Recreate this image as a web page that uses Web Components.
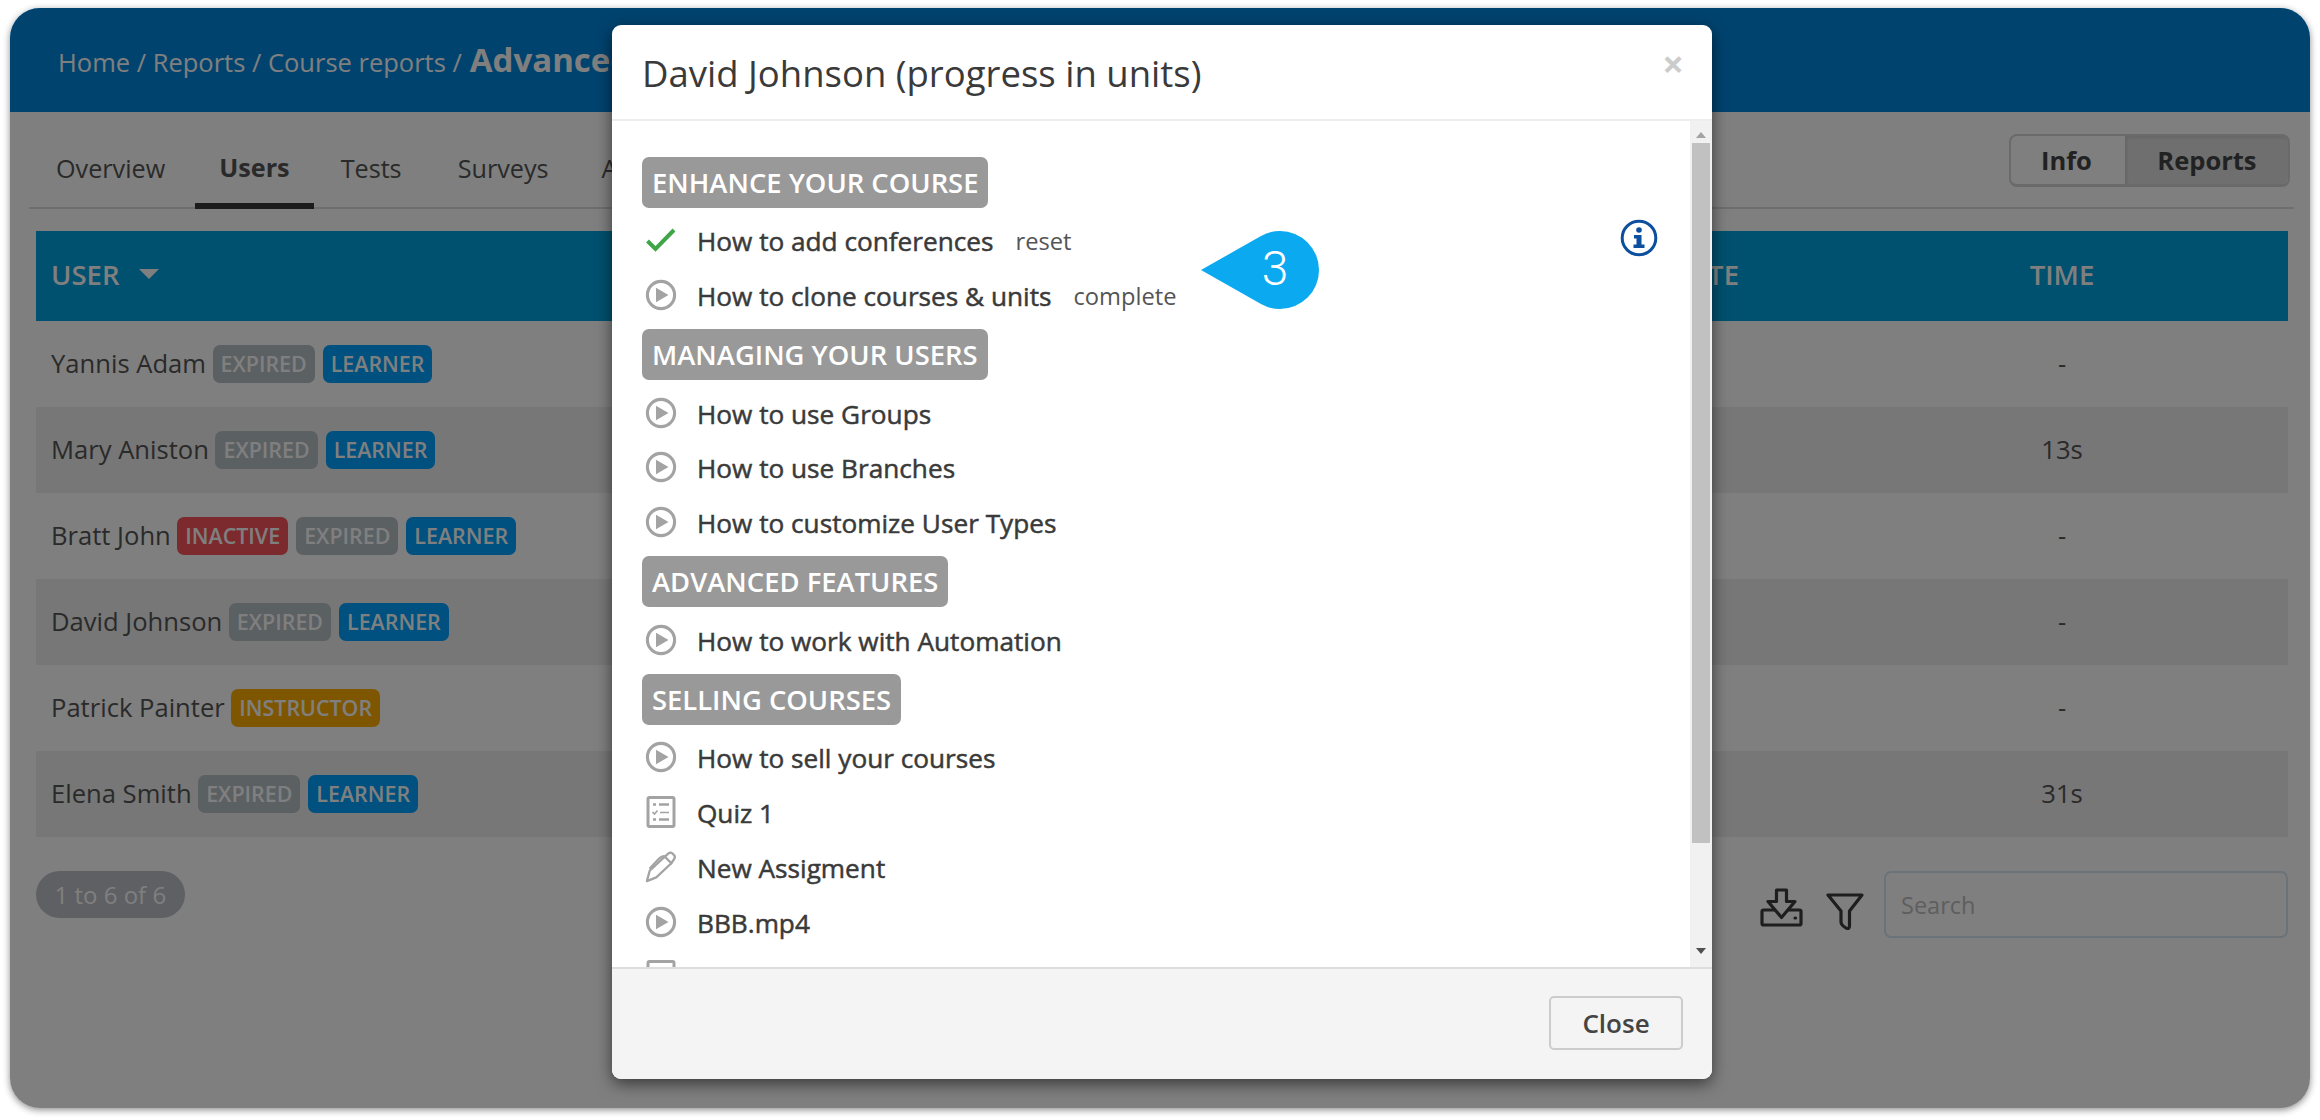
<!DOCTYPE html>
<html lang="en">
<head>
<meta charset="utf-8">
<title>David Johnson (progress in units)</title>
<style>
  html, body { margin: 0; padding: 0; background: #fff; }
  body { width: 2320px; height: 1120px; overflow: hidden; font-family: "Open Sans", "Noto Sans", sans-serif; font-size: 24px; color: #555; }
</style>
</head>
<body>
<app-window>
  <top-header>
    <span slot="crumbs">Home / Reports / Course reports /</span>
    <span slot="current">Advanced</span>
  </top-header>
  <tab-bar></tab-bar>
  <user-table>
    <user-row name="Yannis Adam" tags="expired learner" time="-"></user-row>
    <user-row name="Mary Aniston" tags="expired learner" time="13s" alt></user-row>
    <user-row name="Bratt John" tags="inactive expired learner" time="-"></user-row>
    <user-row name="David Johnson" tags="expired learner" time="-" alt></user-row>
    <user-row name="Patrick Painter" tags="instructor" time="-"></user-row>
    <user-row name="Elena Smith" tags="expired learner" time="31s" alt></user-row>
  </user-table>
  <table-footer></table-footer>

  <progress-modal slot="over">
    <span slot="title">David Johnson (progress in units)</span>
    <unit-section>ENHANCE YOUR COURSE</unit-section>
    <unit-item icon="check" action="reset">How to add conferences</unit-item>
    <unit-item icon="play" action="complete">How to clone courses &amp; units</unit-item>
    <unit-section>MANAGING YOUR USERS</unit-section>
    <unit-item icon="play">How to use Groups</unit-item>
    <unit-item icon="play">How to use Branches</unit-item>
    <unit-item icon="play">How to customize User Types</unit-item>
    <unit-section>ADVANCED FEATURES</unit-section>
    <unit-item icon="play">How to work with Automation</unit-item>
    <unit-section>SELLING COURSES</unit-section>
    <unit-item icon="play">How to sell your courses</unit-item>
    <unit-item icon="quiz">Quiz 1</unit-item>
    <unit-item icon="pen">New Assigment</unit-item>
    <unit-item icon="play">BBB.mp4</unit-item>
    <unit-item icon="quiz"></unit-item>
  </progress-modal>
  <callout-pin slot="over">3</callout-pin>
</app-window>

<script>
const ICONS = {
  check: `<svg width="30" height="24" viewBox="0 0 30 24" fill="none"><path d="M1.5 13 L9.5 21 L28 2" stroke="#3fa648" stroke-width="4"/></svg>`,
  play: `<svg width="32" height="32" viewBox="0 0 32 32"><circle cx="16" cy="16" r="13.6" fill="none" stroke="#a3a3a3" stroke-width="3.1"/><path d="M11 8.7 L23.5 16 L11 23.3 Z" fill="#a3a3a3"/></svg>`,
  quiz: `<svg width="32" height="32" viewBox="0 0 32 32" fill="none" stroke="#a3a3a3"><rect x="3" y="1.5" width="26" height="29" rx="1.5" stroke-width="3"/><path d="M8 8.5h3M14 8.5h10M8 23.5h3M14 23.5h10" stroke-width="2.4"/><path d="M7.5 16l2 2 3-3.5M15 16.5h9" stroke-width="1.6"/></svg>`,
  pen: `<svg width="34" height="34" viewBox="0 0 34 34" fill="none" stroke="#a3a3a3" stroke-width="2.4" stroke-linejoin="round" stroke-linecap="round"><path d="M2 32 L5 21 L21 6 L28 13 L12 28 Z"/><path d="M21 6 L25 2.5 Q27 1 29 2.5 L31 4.5 Q32.5 6.5 31 8.5 L28 13"/><path d="M5.5 18 L15 8 Q17.5 5.5 20 5.5"/></svg>`
};

const TAGS = {
  expired: ['EXPIRED', '#b6c0c6'],
  learner: ['LEARNER', '#00a2ff'],
  inactive: ['INACTIVE', '#f8555a'],
  instructor: ['INSTRUCTOR', '#ffac00']
};

class AppWindow extends HTMLElement {
  constructor() {
    super();
    this.attachShadow({ mode: 'open' });
    this.shadowRoot.innerHTML = `
      <style>
        :host {
          display: block;
          position: relative;
          margin: 8px 10px 0;
          width: 2300px;
          height: 1100px;
          background: #fff;
          border-radius: 30px;
          box-shadow: 0 2px 7px rgba(0, 0, 0, 0.45);
          overflow: hidden;
        }
        .dim {
          position: absolute;
          inset: 0;
          background: rgba(0, 0, 0, 0.5);
        }
      </style>
      <slot></slot>
      <div class="dim"></div>
      <slot name="over"></slot>
    `;
  }
}

class TopHeader extends HTMLElement {
  constructor() {
    super();
    this.attachShadow({ mode: 'open' });
    this.shadowRoot.innerHTML = `
      <style>
        :host {
          display: flex;
          align-items: baseline;
          gap: 8px;
          height: 104px;
          box-sizing: border-box;
          padding: 28px 48px 0;
          background: #0086de;
          color: #fff;
          font-size: 25.5px;
          line-height: 48px;
          white-space: nowrap;
        }
        ::slotted([slot="current"]) { font-weight: 700; font-size: 33px; }
      </style>
      <slot name="crumbs"></slot>
      <slot name="current"></slot>
    `;
  }
}

class TabBar extends HTMLElement {
  constructor() {
    super();
    this.attachShadow({ mode: 'open' });
    const tabs = ['Overview', 'Users', 'Tests', 'Surveys', 'Assignments'];
    this.shadowRoot.innerHTML = `
      <style>
        :host {
          display: flex;
          justify-content: space-between;
          height: 97px;
          box-sizing: border-box;
          margin: 0 16px 0 19px;
          border-bottom: 2px solid #dcdcdc;
          font-size: 25.2px;
        }
        .tabs { display: flex; gap: 5px; padding-left: 3px; }
        .tab {
          padding: 37.5px 24px 0;
          height: 97px;
          box-sizing: border-box;
          line-height: 36px;
          color: #555;
        }
        .tab.active {
          margin: 0 -2px 0 1px;
          padding-top: 37px;
          font-weight: 700;
          border-bottom: 6px solid #383838;
        }
        .tab:nth-child(4) { margin-left: 3px; }
        .group {
          display: flex;
          align-self: flex-start;
          margin: 22px 4px 0 0;
          height: 53px;
          box-sizing: border-box;
          border: 2px solid #d4d4d4;
          border-bottom-width: 3px;
          border-radius: 8px;
          font-size: 25.5px;
          font-weight: 700;
          line-height: 48px;
          color: #444;
        }
        .group span { padding: 0 33px 0 30px; }
        .group .on {
          padding: 0 31.5px 0 32.5px;
          background: #dedede;
          border-radius: 0 6px 6px 0;
          box-shadow: inset 2px 2px 3px rgba(0, 0, 0, 0.08);
        }
      </style>
      <div class="tabs">
        ${tabs.map(t => `<div class="tab ${t === 'Users' ? 'active' : ''}">${t}</div>`).join('')}
      </div>
      <div class="group"><span>Info</span><span class="on">Reports</span></div>
    `;
  }
}

class UserTable extends HTMLElement {
  constructor() {
    super();
    this.attachShadow({ mode: 'open' });
    this.shadowRoot.innerHTML = `
      <style>
        :host {
          display: block;
          margin: 22px 22px 0 26px;
        }
        .head {
          display: grid;
          grid-template-columns: 1fr auto 452px;
          align-items: center;
          height: 90px;
          box-sizing: border-box;
          padding-bottom: 3px;
          background: #00a0de;
          color: #fff;
          font-size: 27.5px;
          font-weight: 600;
        }
        .user { display: flex; align-items: center; gap: 20px; padding-left: 15px; }
        .caret {
          width: 0;
          height: 0;
          margin-top: -1px;
          border-left: 10px solid transparent;
          border-right: 10px solid transparent;
          border-top: 10px solid #fff;
        }
        .date { padding-right: 97px; }
        .time { text-align: center; }
      </style>
      <div class="head">
        <div class="user">USER <i class="caret"></i></div>
        <div class="date">DATE</div>
        <div class="time">TIME</div>
      </div>
      <slot></slot>
    `;
  }
}

class UserRow extends HTMLElement {
  constructor() {
    super();
    this.attachShadow({ mode: 'open' });
  }

  connectedCallback() {
    const tags = this.getAttribute('tags').split(' ');
    this.shadowRoot.innerHTML = `
      <style>
        :host {
          display: grid;
          grid-template-columns: 1fr 452px;
          align-items: center;
          height: 86px;
          background: #fff;
          font-size: 25.6px;
        }
        :host([alt]) { background: #eee; }
        .who { display: flex; align-items: center; padding-left: 15px; gap: 8px; }
        .name { margin: 0 -1.5px 1px 0; }
        .time { text-align: center; margin-bottom: 1px; }
      </style>
      <div class="who">
        <span class="name">${this.getAttribute('name')}</span>
        ${tags.map(t => `<status-tag kind="${t}"></status-tag>`).join('')}
      </div>
      <div class="time">${this.getAttribute('time')}</div>
    `;
  }
}

class StatusTag extends HTMLElement {
  constructor() {
    super();
    this.attachShadow({ mode: 'open' });
  }

  connectedCallback() {
    const [label, bg] = TAGS[this.getAttribute('kind')];
    this.shadowRoot.innerHTML = `
      <style>
        :host {
          display: inline-block;
          height: 38px;
          box-sizing: border-box;
          padding: 0 8px;
          border-radius: 7px;
          background: ${bg};
          color: #fff;
          font-size: 21.4px;
          font-weight: 600;
          line-height: 38px;
        }
      </style>
      ${label}
    `;
  }
}

class TableFooter extends HTMLElement {
  constructor() {
    super();
    this.attachShadow({ mode: 'open' });
    this.shadowRoot.innerHTML = `
      <style>
        :host {
          display: flex;
          align-items: flex-start;
          justify-content: space-between;
          margin: 34px 22px 0 26px;
        }
        .pill {
          height: 47px;
          padding: 0 18.5px;
          border-radius: 24px;
          background: #bcc0c6;
          color: #fff;
          font-size: 24px;
          line-height: 47px;
        }
        .tools { display: flex; align-items: flex-start; }
        .tools svg { display: block; }
        .dl { margin: 17px 23px 0 0; }
        .filter { margin: 21px 20px 0 0; }
        .search {
          width: 404px;
          height: 67px;
          box-sizing: border-box;
          padding-left: 15px;
          border: 2px solid #d8e6f0;
          border-radius: 7px;
          color: #bdbdbd;
          font-size: 23.5px;
          line-height: 65px;
        }
      </style>
      <div class="pill">1 to 6 of 6</div>
      <div class="tools">
        <svg class="dl" width="43" height="39" viewBox="0 0 43 39" fill="none" stroke="#3c3c3c" stroke-width="3.2" stroke-linejoin="round" stroke-linecap="round">
          <path d="M16.5 2 H26.5 V13.5 H35 L21.5 29.5 L8 13.5 H16.5 Z"/>
          <path d="M14 22 H3.5 Q2 22 2 23.5 V35.5 Q2 37 3.5 37 H39.5 Q41 37 41 35.5 V23.5 Q41 22 39.5 22 H29"/>
          <path d="M35 30 h.6"/>
        </svg>
        <svg class="filter" width="38" height="39" viewBox="0 0 38 39" fill="none" stroke="#3c3c3c" stroke-width="3.2" stroke-linejoin="round">
          <path d="M2 3 H36 L23.5 19 V34 Q23.5 37.5 20 36 Q15 33 15 30 V19 Z"/>
        </svg>
        <div class="search">Search</div>
      </div>
    `;
  }
}

class ProgressModal extends HTMLElement {
  constructor() {
    super();
    this.attachShadow({ mode: 'open' });
    this.shadowRoot.innerHTML = `
      <style>
        :host {
          position: absolute;
          left: 602px;
          top: 17px;
          width: 1100px;
          height: 1054px;
          display: flex;
          flex-direction: column;
          background: #fff;
          border-radius: 9px;
          box-shadow: 0 5px 16px rgba(0, 0, 0, 0.55);
          overflow: hidden;
          color: #3a3a3a;
        }
        header {
          flex: none;
          display: flex;
          justify-content: space-between;
          height: 96px;
          box-sizing: border-box;
          padding: 0 28px 0 30px;
          border-bottom: 2px solid #eee;
        }
        ::slotted([slot="title"]) { font-size: 36.5px; line-height: 96px; }
        .x { color: #ccc; font-size: 38px; font-weight: 700; line-height: 76px; }
        .body { flex: 1; display: flex; min-height: 0; }
        .list {
          flex: 1;
          padding: 31px 0 0 30px;
          overflow: hidden;
          position: relative;
        }
        .bar {
          flex: none;
          width: 22px;
          display: flex;
          flex-direction: column;
          align-items: center;
          background: #f1f1f1;
        }
        .thumb { width: 18px; height: 700px; background: #c1c1c1; margin: 22px 0 0; }
        .up, .down { width: 0; height: 0; border-left: 5px solid transparent; border-right: 5px solid transparent; }
        .up { margin-top: 11px; border-bottom: 6px solid #a3a3a3; position: absolute; }
        .down { margin-top: 105px; border-top: 6px solid #505050; }
        .info { position: absolute; left: 1008px; top: 98px; }
        footer {
          flex: none;
          height: 112px;
          box-sizing: border-box;
          padding: 27px 29px 0 0;
          display: flex;
          justify-content: flex-end;
          background: #f4f4f4;
          border-top: 2px solid #ddd;
        }
        button {
          width: 134px;
          height: 54px;
          background: #f4f4f4;
          border: 2px solid #ccc;
          border-radius: 5px;
          font: 600 26px "Open Sans", sans-serif;
          color: #444;
        }
      </style>
      <header>
        <slot name="title"></slot>
        <span class="x">×</span>
      </header>
      <div class="body">
        <div class="list">
          <slot></slot>
          <svg class="info" width="38" height="38" viewBox="0 0 38 38">
            <circle cx="19" cy="19" r="16.8" fill="none" stroke="#0b4f9e" stroke-width="3"/>
            <circle cx="19" cy="11" r="2.8" fill="#0b4f9e"/>
            <path d="M14 16 h7.5 v9.5 h3 v3.5 h-11 v-3.5 h3 v-6 h-2.5 z" fill="#0b4f9e"/>
          </svg>
        </div>
        <div class="bar">
          <i class="up"></i>
          <div class="thumb"></div>
          <i class="down"></i>
        </div>
      </div>
      <footer><button>Close</button></footer>
    `;
  }
}

class UnitSection extends HTMLElement {
  constructor() {
    super();
    this.attachShadow({ mode: 'open' });
    this.shadowRoot.innerHTML = `
      <style>
        :host {
          display: table;
          height: 51px;
          box-sizing: border-box;
          margin: 5px 0 7px;
          padding: 0 10px;
          border-radius: 7px;
          background: #999;
          color: #fff;
          font-size: 27.4px;
          font-weight: 600;
          line-height: 51px;
        }
      </style>
      <slot></slot>
    `;
  }
}

class UnitItem extends HTMLElement {
  constructor() {
    super();
    this.attachShadow({ mode: 'open' });
  }

  connectedCallback() {
    const action = this.getAttribute('action');
    this.shadowRoot.innerHTML = `
      <style>
        :host {
          display: flex;
          align-items: center;
          height: 54.7px;
          box-sizing: border-box;
          padding-bottom: 2px;
          font-size: 26.2px;
          font-weight: 500;
          -webkit-text-stroke: 0.5px #3a3a3a;
          color: #3a3a3a;
        }
        .icon { flex: none; width: 32px; height: 32px; margin: 0 20px 2px 3px; display: flex; align-items: center; justify-content: center; }
        .action { margin-left: 22px; font-size: 23.7px; font-weight: 400; -webkit-text-stroke: 0; color: #555; }
      </style>
      <span class="icon">${ICONS[this.getAttribute('icon')]}</span>
      <slot></slot>
      ${action ? `<span class="action">${action}</span>` : ''}
    `;
  }
}

class CalloutPin extends HTMLElement {
  constructor() {
    super();
    this.attachShadow({ mode: 'open' });
    this.shadowRoot.innerHTML = `
      <style>
        :host {
          position: absolute;
          left: 1191px;
          top: 223px;
          width: 118px;
          height: 78px;
        }
        svg { position: absolute; inset: 0; }
        .n {
          position: absolute;
          left: 58px;
          top: 0;
          width: 32px;
          text-align: center;
          color: #fff;
          font: 300 48px/76px Roboto, sans-serif;
        }
      </style>
      <svg width="118" height="78" viewBox="0 0 118 78">
        <path d="M0 39 L60 5 Q69 0 79 0 A39 39 0 0 1 79 78 Q69 78 60 73 Z" fill="#0aa9f0"/>
      </svg>
      <div class="n"><slot></slot></div>
    `;
  }
}

customElements.define('app-window', AppWindow);
customElements.define('top-header', TopHeader);
customElements.define('tab-bar', TabBar);
customElements.define('user-table', UserTable);
customElements.define('user-row', UserRow);
customElements.define('status-tag', StatusTag);
customElements.define('table-footer', TableFooter);
customElements.define('progress-modal', ProgressModal);
customElements.define('unit-section', UnitSection);
customElements.define('unit-item', UnitItem);
customElements.define('callout-pin', CalloutPin);
</script>
</body>
</html>
